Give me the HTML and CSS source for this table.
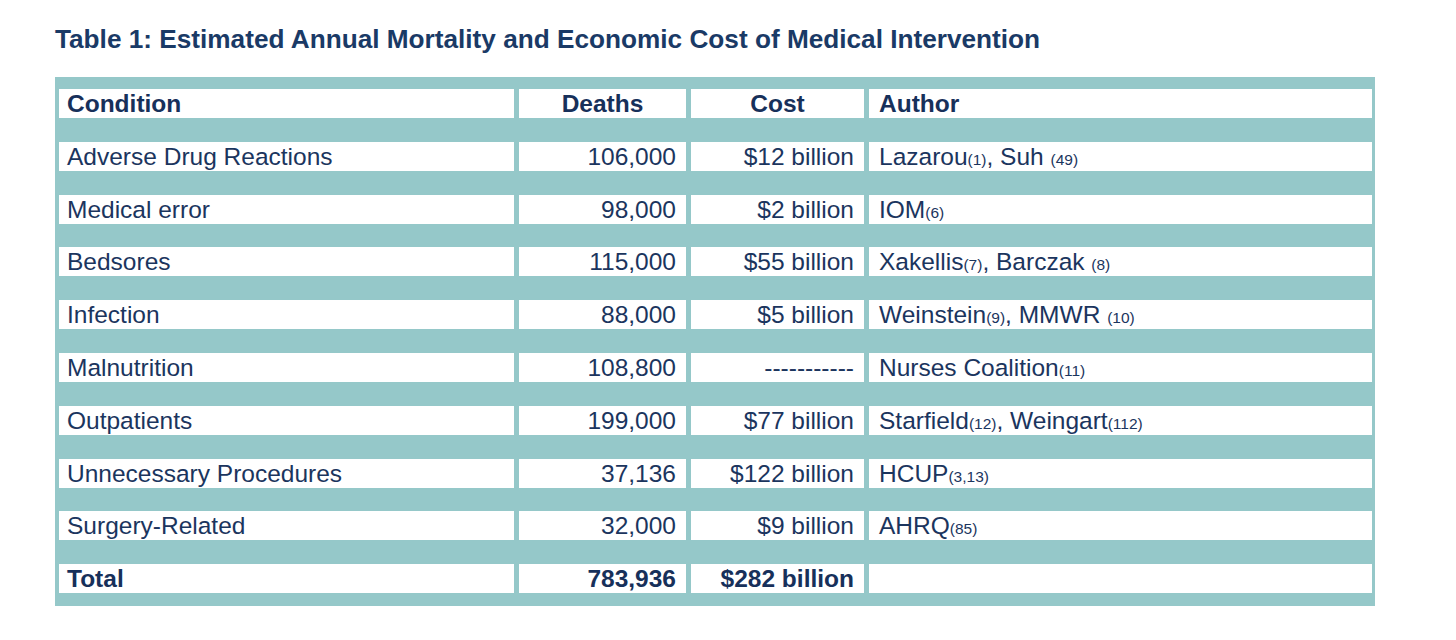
FILE: index.html
```html
<!DOCTYPE html>
<html>
<head>
<meta charset="utf-8">
<link rel="stylesheet" href="styles.css">
</head>
<body>
<div class="page">
  <h1 class="title">Table 1: Estimated Annual Mortality and Economic Cost of Medical Intervention</h1>
  <div class="grid">
    <div class="cell head">Condition</div>
    <div class="cell head center">Deaths</div>
    <div class="cell head center">Cost</div>
    <div class="cell head author">Author</div>

    <div class="cell">Adverse Drug Reactions</div>
    <div class="cell num">106,000</div>
    <div class="cell num">$12 billion</div>
    <div class="cell author">Lazarou<span class="ref">(1)</span>, Suh <span class="ref">(49)</span></div>

    <div class="cell">Medical error</div>
    <div class="cell num">98,000</div>
    <div class="cell num">$2 billion</div>
    <div class="cell author">IOM<span class="ref">(6)</span></div>

    <div class="cell">Bedsores</div>
    <div class="cell num">115,000</div>
    <div class="cell num">$55 billion</div>
    <div class="cell author">Xakellis<span class="ref">(7)</span>, Barczak <span class="ref">(8)</span></div>

    <div class="cell">Infection</div>
    <div class="cell num">88,000</div>
    <div class="cell num">$5 billion</div>
    <div class="cell author">Weinstein<span class="ref">(9)</span>, MMWR <span class="ref">(10)</span></div>

    <div class="cell">Malnutrition</div>
    <div class="cell num">108,800</div>
    <div class="cell num">-----------</div>
    <div class="cell author">Nurses Coalition<span class="ref">(11)</span></div>

    <div class="cell">Outpatients</div>
    <div class="cell num">199,000</div>
    <div class="cell num">$77 billion</div>
    <div class="cell author">Starfield<span class="ref">(12)</span>, Weingart<span class="ref">(112)</span></div>

    <div class="cell">Unnecessary Procedures</div>
    <div class="cell num">37,136</div>
    <div class="cell num">$122 billion</div>
    <div class="cell author">HCUP<span class="ref">(3,13)</span></div>

    <div class="cell">Surgery-Related</div>
    <div class="cell num">32,000</div>
    <div class="cell num">$9 billion</div>
    <div class="cell author">AHRQ<span class="ref">(85)</span></div>

    <div class="cell head">Total</div>
    <div class="cell head num">783,936</div>
    <div class="cell head num">$282 billion</div>
    <div class="cell head author"></div>
  </div>
</div>
</body>
</html>
```

FILE: styles.css
```css
html, body {
  margin: 0;
  padding: 0;
  background: #ffffff;
}

.page {
  padding: 26px 0 0 55px;
  font-family: "Liberation Sans", Arial, sans-serif;
  color: #1b355e;
}

.title {
  margin: 0 0 24px 0;
  font-size: 26.2px;
  font-weight: bold;
  line-height: 27px;
  color: #1a3a66;
}

.grid {
  display: grid;
  grid-template-columns: 455px 167px 173px 503px;
  grid-auto-rows: 29px;
  column-gap: 5px;
  row-gap: 23.8px;
  padding: 12px 3px 13px 4px;
  width: 1313px;
  background: #95c8c9;
}

.cell {
  background: #ffffff;
  font-size: 24.5px;
  line-height: 29px;
  padding: 0 10px 0 8px;
  white-space: nowrap;
  overflow: hidden;
}

.author {
  padding-left: 10px;
}

.head {
  font-weight: bold;
  color: #17305a;
}

.center {
  text-align: center;
  padding: 0;
}

.num {
  text-align: right;
}

.ref {
  font-size: 15.5px;
}
```
